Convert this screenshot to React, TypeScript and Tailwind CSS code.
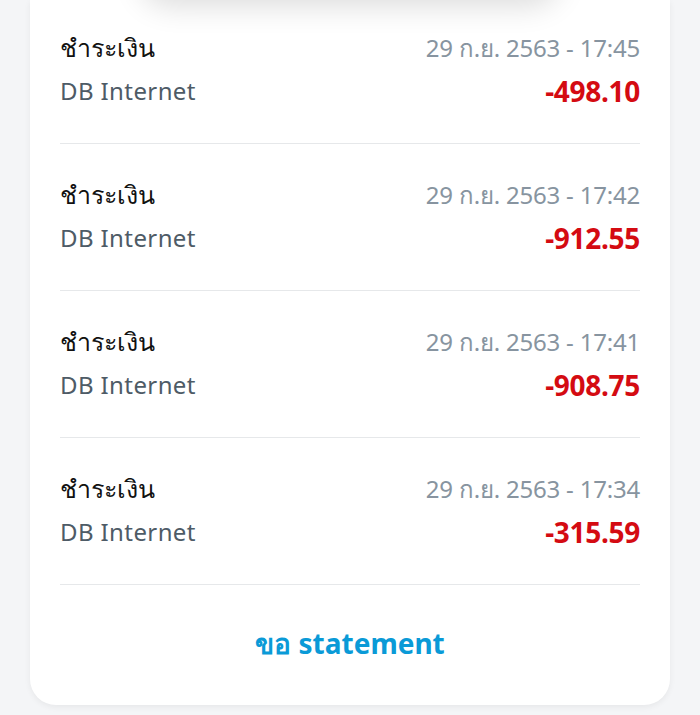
import React from 'react';

const ROWS = [
  { date: '29 ก.ย. 2563 - 17:45', amount: '-498.10' },
  { date: '29 ก.ย. 2563 - 17:42', amount: '-912.55' },
  { date: '29 ก.ย. 2563 - 17:41', amount: '-908.75' },
  { date: '29 ก.ย. 2563 - 17:34', amount: '-315.59' },
];

const Row = ({ date, amount, first }: { date: string; amount: string; first?: boolean }) => (
  <div className={`${first ? 'pt-[31px]' : 'pt-[34px]'} pb-[35px] border-b border-[#e6e8ea]`}>
    <div className="flex items-center justify-between h-[34px]">
      <span className="text-[25px] font-light text-[#111]">ชำระเงิน</span>
      <span className="text-[24px] text-[#8794a0] tracking-[-0.2px]">{date}</span>
    </div>
    <div className="flex items-center justify-between h-[34px] mt-[9px]">
      <span className="text-[24px] text-[#4e5b66] tracking-[0.4px]">DB Internet</span>
      <span className="text-[28px] font-bold text-[#d40b12] tracking-[-0.3px]">{amount}</span>
    </div>
  </div>
);

export default function App() {
  return (
    <div
      className="relative w-[700px] h-[715px] bg-[#f4f5f7] overflow-hidden"
      style={{ fontFamily: '"Noto Sans", "Open Sans", sans-serif' }}
    >
      <div className="absolute left-[140px] top-[-60px] w-[420px] h-[60px] rounded-full shadow-[0_6px_30px_rgba(0,0,0,0.14)] bg-white z-10" />
      <div className="mx-[30px] bg-white rounded-b-[26px] shadow-[0_2px_6px_rgba(0,0,0,0.06)] h-[705px] px-[30px]">
        {ROWS.map((r, i) => (
          <Row key={i} date={r.date} amount={r.amount} first={i === 0} />
        ))}
        <div className="flex items-center justify-center h-[116px]">
          <button className="text-[28px] font-bold text-[#0a9ad7]">ขอ statement</button>
        </div>
      </div>
    </div>
  );
}
